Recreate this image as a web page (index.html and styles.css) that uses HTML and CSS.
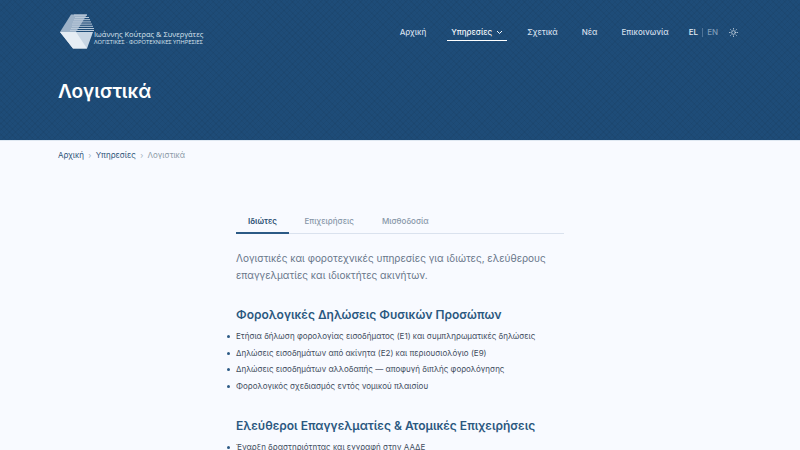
FILE: index.html
```html
<!DOCTYPE html>
<html lang="el">
<head>
<meta charset="utf-8">
<title>Λογιστικά</title>
<link rel="stylesheet" href="styles.css">
</head>
<body>
<header class="hero">
  <div class="topbar">
    <a class="brand">
      <svg class="logo" width="36" height="36" viewBox="0 0 36 36">
        <polygon points="0,18 11,0.5 27,0.5 16,18" fill="#9db2c8"/>
        <g fill="#b9c9d9">
          <rect x="14" y="0.5" width="13" height="1.2"/>
          <rect x="15" y="3" width="14" height="1"/>
          <rect x="14" y="5.2" width="16" height="1"/>
          <rect x="13" y="7.4" width="18" height="1"/>
          <rect x="12" y="9.6" width="20" height="1"/>
          <rect x="12" y="11.8" width="21" height="1"/>
          <rect x="11" y="14" width="23" height="1"/>
          <rect x="10" y="16" width="24" height="1"/>
        </g>
        <polygon points="0,18 33,18 27,34.5 13,34.5" fill="#c7d5e3"/>
        <polygon points="0,18 16,18 27,34.5 13,34.5" fill="#e6edf4"/>
      </svg>
      <span class="brand-text">
        <span class="brand-name">Ιωάννης Κούτρας &amp; Συνεργάτες</span>
        <span class="brand-sub">ΛΟΓΙΣΤΙΚΕΣ · ΦΟΡΟΤΕΧΝΙΚΕΣ ΥΠΗΡΕΣΙΕΣ</span>
      </span>
    </a>
    <nav class="nav">
      <a class="nav-link">Αρχική</a>
      <a class="nav-link active">Υπηρεσίες
        <svg class="chev" width="7" height="5" viewBox="0 0 7 5"><path d="M1 1l2.5 2.5L6 1" fill="none" stroke="currentColor" stroke-width="1"/></svg>
      </a>
      <a class="nav-link">Σχετικά</a>
      <a class="nav-link">Νέα</a>
      <a class="nav-link">Επικοινωνία</a>
    </nav>
    <div class="lang">
      <span class="lang-on">EL</span><span class="lang-sep"></span><span class="lang-off">EN</span>
      <svg class="sun" width="9" height="9" viewBox="0 0 24 24" fill="none" stroke="currentColor" stroke-width="2" stroke-linecap="round">
        <circle cx="12" cy="12" r="5"/>
        <path d="M12 1v2M12 21v2M4.2 4.2l1.4 1.4M18.4 18.4l1.4 1.4M1 12h2M21 12h2M4.2 19.8l1.4-1.4M18.4 5.6l1.4-1.4"/>
      </svg>
    </div>
  </div>
  <h1 class="title">Λογιστικά</h1>
</header>
<div class="crumbs">
  <a class="crumb">Αρχική</a><span class="crumb-sep">›</span><a class="crumb">Υπηρεσίες</a><span class="crumb-sep">›</span><span class="crumb-now">Λογιστικά</span>
</div>
<main class="content">
  <div class="tabs">
    <a class="tab tab-on">Ιδιώτες</a>
    <a class="tab">Επιχειρήσεις</a>
    <a class="tab">Μισθοδοσία</a>
  </div>
  <p class="lead">Λογιστικές και φοροτεχνικές υπηρεσίες για ιδιώτες, ελεύθερους επαγγελματίες και ιδιοκτήτες ακινήτων.</p>
  <h2 class="heading">Φορολογικές Δηλώσεις Φυσικών Προσώπων</h2>
  <ul class="list">
    <li>Ετήσια δήλωση φορολογίας εισοδήματος (Ε1) και συμπληρωματικές δηλώσεις</li>
    <li>Δηλώσεις εισοδημάτων από ακίνητα (Ε2) και περιουσιολόγιο (Ε9)</li>
    <li>Δηλώσεις εισοδημάτων αλλοδαπής — αποφυγή διπλής φορολόγησης</li>
    <li>Φορολογικός σχεδιασμός εντός νομικού πλαισίου</li>
  </ul>
  <h2 class="heading">Ελεύθεροι Επαγγελματίες &amp; Ατομικές Επιχειρήσεις</h2>
  <ul class="list">
    <li>Έναρξη δραστηριότητας και εγγραφή στην ΑΑΔΕ</li>
  </ul>
</main>
</body>
</html>
```
FILE: styles.css
```css
* { box-sizing: border-box; }
html, body { margin: 0; height: 450px; overflow: hidden; }
body { background: #f8faff; font-family: Inter, "Noto Sans", sans-serif; color: #37475a; }
a { color: inherit; text-decoration: none; }

.hero {
  height: 141px;
  padding: 14px 62px 0 60px;
  color: #fff;
  background-color: #1e4c78;
  background-image:
    repeating-linear-gradient(45deg, rgba(0,0,0,.045) 0 1px, transparent 1px 4px),
    repeating-linear-gradient(-45deg, rgba(0,0,0,.045) 0 1px, transparent 1px 4px);
  border-bottom: 1px solid #dfe8f2;
}
.topbar { display: flex; align-items: flex-start; height: 36px; }
.brand { display: flex; align-items: flex-start; flex: 1; }
.logo { display: block; flex: none; margin-right: -2px; }
.brand-text { display: flex; flex-direction: column; padding-top: 15px; }
.brand-name { font-family: "Open Sans", sans-serif; font-size: 7.45px; line-height: 10px; color: #dbe5ef; white-space: nowrap; }
.brand-sub { font-family: "Open Sans", sans-serif; font-size: 5.75px; line-height: 7px; color: #dbe5ef; white-space: nowrap; }

.nav { display: flex; gap: 16px; padding-top: 12px; margin-right: 16px; }
.nav-link { font-size: 8px; font-weight: 500; line-height: 12px; padding: 0 4px 2px; color: #d3dfeb; white-space: nowrap; border-bottom: 1px solid transparent; }
.nav-link.active { color: #f4f8fb; border-bottom-color: #fff; }
.nav-link:first-child { margin-right: 1px; margin-left: -1px; }
.chev { margin-left: 2px; }

.lang { display: flex; align-items: center; padding-top: 12px; height: 24px; font-size: 8px; font-weight: 500; }
.lang-on { color: #e4ecf4; }
.lang-sep { width: 1px; height: 9px; margin: 0 4px; background: #4f7397; }
.lang-off { color: #7f9cb8; }
.sun { margin-left: 11px; color: #cfdbe7; }

.title { margin: 30px 0 0 -2px; font-size: 19px; line-height: 24px; font-weight: 600; color: #fff; }

.crumbs { display: flex; align-items: center; height: 28px; padding-left: 58px; font-size: 8px; color: #2f5579; }
.crumb-sep { margin: 0 4.3px; color: #a5b2c0; }
.crumb-now { color: #8d9aa8; }

.content { width: 328px; margin: 31px 0 0 236px; }
.tabs { display: flex; border-bottom: 1px solid #dae2ee; height: 34px; gap: 3px; }
.tab { padding: 15px 12.5px 0; font-size: 8px; font-weight: 500; line-height: 12px; color: #8797a8; }
.tab-on { color: #274c70; font-weight: 600; border-bottom: 2px solid #2c5a85; height: 34px; width: 53px; padding-left: 12px; padding-right: 0; }

.lead { margin: 16px 0 0; font-size: 10px; line-height: 17px; color: #68778a; }
.heading { margin: 22px 0 0; font-size: 12px; line-height: 18px; font-weight: 600; color: #2b5880; }
.heading + .list { margin-top: 4px; }
.list { margin: 0 0 15px; padding: 0; list-style: none; }
.list li { position: relative; font-size: 8px; line-height: 16.7px; color: #3f4d5e; white-space: nowrap; }
.list li::before { content: ""; position: absolute; left: -9px; top: 7px; width: 3px; height: 3px; border-radius: 50%; background: #2c5a85; }
```
